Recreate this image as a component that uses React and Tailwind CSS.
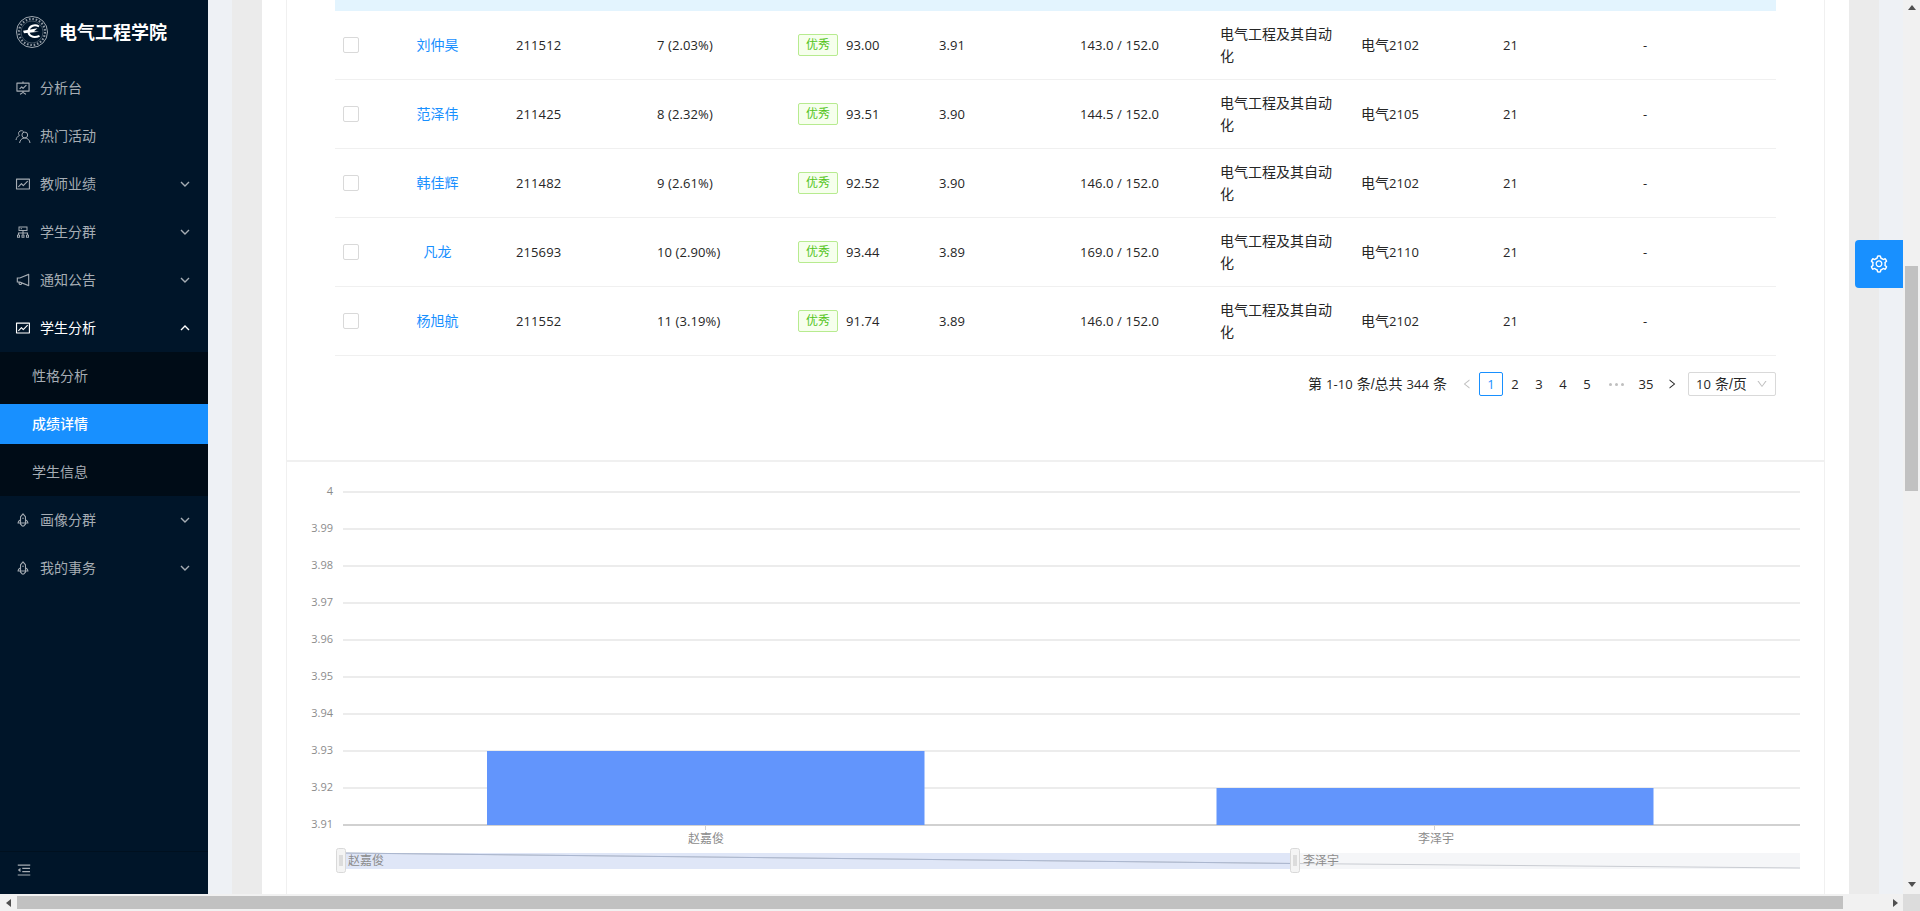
import React from 'react';
import {
  AiOutlineFundProjectionScreen,
  AiOutlineFund,
  AiOutlineCluster,
  AiOutlineNotification,
  AiOutlineRocket,
  AiOutlineMenuFold,
  AiOutlineSetting,
  AiOutlineLeft,
  AiOutlineRight,
  AiOutlineDown,
} from 'react-icons/ai';

const FONT = '"Liberation Sans", "Noto Sans CJK SC", sans-serif';
const NUM_FONT = '"Open Sans", sans-serif';

const rows = [
  { name: '刘仲昊', id: '211512', rank: '7 (2.03%)', score: '93.00', gpa: '3.91', credit: '143.0 / 152.0', cls: '2102' },
  { name: '范泽伟', id: '211425', rank: '8 (2.32%)', score: '93.51', gpa: '3.90', credit: '144.5 / 152.0', cls: '2105' },
  { name: '韩佳辉', id: '211482', rank: '9 (2.61%)', score: '92.52', gpa: '3.90', credit: '146.0 / 152.0', cls: '2102' },
  { name: '凡龙', id: '215693', rank: '10 (2.90%)', score: '93.44', gpa: '3.89', credit: '169.0 / 152.0', cls: '2110' },
  { name: '杨旭航', id: '211552', rank: '11 (3.19%)', score: '91.74', gpa: '3.89', credit: '146.0 / 152.0', cls: '2102' },
];

const ticks = ['4', '3.99', '3.98', '3.97', '3.96', '3.95', '3.94', '3.93', '3.92', '3.91'];

function Num({ children }) {
  return <span className="font-['Open_Sans'] text-[13px] tracking-[0.1px]">{children}</span>;
}

function Chevron({ up }) {
  return (
    <svg width="10" height="6" viewBox="0 0 10 6" fill="none" stroke="currentColor" strokeWidth="1.4" className="ml-auto">
      <path d={up ? 'M1 5l4-4 4 4' : 'M1 1l4 4 4-4'} />
    </svg>
  );
}

// two overlapping people, no matching icon in the packages
function PeopleIcon({ size, className }) {
  return (
    <svg width={size} height={size} viewBox="0 0 16 16" fill="none" stroke="currentColor" strokeWidth="1" className={className}>
      <circle cx="9.8" cy="7" r="2.9" />
      <path d="M4.6 15c.3-2.9 2.4-5 5.2-5s4.9 2.1 5.2 5" />
      <path d="M8.6 3.6A3 3 0 0 0 4 3.9c-.8 1.2-.5 2.6.5 3.5C2.6 8.2 1.3 10 1 12" />
    </svg>
  );
}

function MenuItem({ icon: Icon, label, arrow, open }) {
  return (
    <div className={`flex items-center h-10 my-1 pl-[15px] pr-[18px] text-sm ${open ? 'text-white' : 'text-[#a6adb4]'}`}>
      <Icon size={16} className="mr-[9px] shrink-0" />
      <span>{label}</span>
      {arrow && <Chevron up={open} />}
    </div>
  );
}

function SubItem({ label, active }) {
  return (
    <div className={`flex items-center h-10 my-1 pl-8 text-sm ${active ? 'bg-[#1890ff] text-white font-medium' : 'text-[#a6adb4]'}`}>
      {label}
    </div>
  );
}

function Logo() {
  return (
    <svg width="32" height="32" viewBox="0 0 32 32" className="shrink-0">
      <circle cx="16" cy="16" r="15.5" fill="none" stroke="#c9ced3" strokeWidth="0.8" />
      <circle cx="16" cy="16" r="13" fill="none" stroke="#8d97a1" strokeWidth="2.2" strokeDasharray="1.6 1.8" />
      <circle cx="16" cy="16" r="11" fill="none" stroke="#7f8a95" strokeWidth="0.5" />
      <path d="M23 10.5C19 8 13.5 9.5 12.5 14.5C12 19.5 17 23 23.5 19.8" fill="none" stroke="#fff" strokeWidth="2" />
      <path d="M7 14.8L21.5 12.2L18 15.2L23 15.8L8 17.2Z" fill="#fff" />
    </svg>
  );
}

function Sidebar() {
  return (
    <aside className="w-[208px] h-[894px] bg-[#001529] flex flex-col shrink-0">
      <div className="flex items-center h-16 pl-4 shrink-0">
        <Logo />
        <span className="ml-[11px] pt-[2px] text-lg font-bold text-white leading-none">电气工程学院</span>
      </div>
      <div className="flex-1 flex flex-col">
        <MenuItem icon={AiOutlineFundProjectionScreen} label="分析台" />
        <MenuItem icon={PeopleIcon} label="热门活动" />
        <MenuItem icon={AiOutlineFund} label="教师业绩" arrow />
        <MenuItem icon={AiOutlineCluster} label="学生分群" arrow />
        <MenuItem icon={AiOutlineNotification} label="通知公告" arrow />
        <MenuItem icon={AiOutlineFund} label="学生分析" arrow open />
        <div className="bg-[#000c17] flex flex-col">
          <SubItem label="性格分析" />
          <SubItem label="成绩详情" active />
          <SubItem label="学生信息" />
        </div>
        <MenuItem icon={AiOutlineRocket} label="画像分群" arrow />
        <MenuItem icon={AiOutlineRocket} label="我的事务" arrow />
      </div>
      <div className="h-[43px] border-t border-[#00101f] flex items-center pl-4 pb-[7px] text-[#a6adb4]">
        <AiOutlineMenuFold size={16} />
      </div>
    </aside>
  );
}

function TableRow({ r }) {
  return (
    <div className="grid grid-cols-[40px_125px_repeat(8,141px)_148px] items-center h-[69px] border-b border-[#f0f0f0] text-sm text-[#262626]">
      <div className="pl-2">
        <div className="w-4 h-4 rounded-[2px] border border-[#d9d9d9] bg-white" />
      </div>
      <div className="text-center text-[#1890ff]">{r.name}</div>
      <div className="pl-4"><Num>{r.id}</Num></div>
      <div className="pl-4"><Num>{r.rank}</Num></div>
      <div className="pl-4 flex items-center">
        <span className="h-[22px] w-10 mr-2 flex items-center justify-center rounded-[2px] border border-[#b7eb8f] bg-[#f6ffed] text-xs text-[#52c41a]">优秀</span>
        <Num>{r.score}</Num>
      </div>
      <div className="pl-4"><Num>{r.gpa}</Num></div>
      <div className="pl-4"><Num>{r.credit}</Num></div>
      <div className="pl-[15px] pr-3 leading-[22px]">电气工程及其自动化</div>
      <div className="pl-[15px]">电气<Num>{r.cls}</Num></div>
      <div className="pl-4"><Num>21</Num></div>
      <div className="pl-[15px]"><Num>-</Num></div>
    </div>
  );
}

function Pagination() {
  return (
    <div className="flex items-center justify-end h-6 mt-[16px] text-sm text-[#262626]">
      <span className="mr-2">第 <Num>1-10</Num> 条/总共 <Num>344</Num> 条</span>
      <span className="w-6 flex justify-center text-[#bfbfbf]"><AiOutlineLeft size={12} /></span>
      <span className="w-6 h-6 flex items-center justify-center rounded-[2px] border border-[#1890ff] text-[#1890ff]"><Num>1</Num></span>
      {['2', '3', '4', '5'].map((n) => (
        <span key={n} className="w-6 text-center"><Num>{n}</Num></span>
      ))}
      <span className="w-[35px] flex justify-center gap-[3px]">
        <i className="w-[3px] h-[3px] rounded-full bg-[#bfbfbf]" />
        <i className="w-[3px] h-[3px] rounded-full bg-[#bfbfbf]" />
        <i className="w-[3px] h-[3px] rounded-full bg-[#bfbfbf]" />
      </span>
      <span className="w-6 text-center"><Num>35</Num></span>
      <span className="w-[28px] flex justify-center"><AiOutlineRight size={12} /></span>
      <div className="ml-[2px] w-[88px] h-6 flex items-center pl-[7px] pr-[7px] rounded-[2px] border border-[#d9d9d9]">
        <Num>10</Num>&nbsp;条/页
        <AiOutlineDown size={12} className="ml-auto text-[#bfbfbf]" />
      </div>
    </div>
  );
}

// bar chart with the data zoom strip underneath, x/y are relative to the card
function Chart() {
  const left = 56;
  const right = 1513;
  const y = (i) => 30 + i * 37;
  return (
    <svg width="1536" height="430" viewBox="0 0 1536 430" className="block" style={{ fontFamily: FONT }}>
      {ticks.map((t, i) => (
        <g key={t}>
          <line x1={left} x2={right} y1={y(i)} y2={y(i)} stroke={i === 9 ? '#a3a3a3' : '#d9d9d9'} />
          <text x="46" y={y(i) + 3} textAnchor="end" fontSize="11" fill="#8c8c8c" style={{ fontFamily: NUM_FONT }}>{t}</text>
        </g>
      ))}
      <rect x="200" y={y(7)} width="437.5" height="74" fill="#6295fc" />
      <rect x="929.5" y={y(8)} width="437" height="37" fill="#6295fc" />
      <line x1="418.5" x2="418.5" y1={y(9)} y2={y(9) + 5} stroke="#d0d0d0" />
      <line x1="1147.5" x2="1147.5" y1={y(9)} y2={y(9) + 5} stroke="#d0d0d0" />
      <text x="419" y="381" textAnchor="middle" fontSize="12" fill="#8c8c8c">赵嘉俊</text>
      <text x="1149" y="381" textAnchor="middle" fontSize="12" fill="#8c8c8c">李泽宇</text>

      <rect x="56" y="391" width="1457" height="16" fill="#f5f6f8" />
      <rect x="56" y="391" width="952" height="16" fill="#dfe6f7" />
      <path d="M56 391L1008 401.5L1513 406" fill="none" stroke="#c9ccd2" />
      <path d="M56 391L1008 401.5" fill="none" stroke="#aab6cf" />
      <text x="61" y="403" fontSize="12" fill="#8c8c8c">赵嘉俊</text>
      <text x="1016" y="403" fontSize="12" fill="#8c8c8c">李泽宇</text>
      {[49.5, 1003.5].map((x) => (
        <g key={x}>
          <rect x={x} y="386.5" width="9" height="24" rx="2" fill="#f4f4f4" stroke="#d9d9d9" />
          <line x1={x + 3.5} x2={x + 3.5} y1="393" y2="404" stroke="#c4c4c4" />
          <line x1={x + 5.5} x2={x + 5.5} y1="393" y2="404" stroke="#c4c4c4" />
        </g>
      ))}
    </svg>
  );
}

function Arrow({ dir, className }) {
  const d = { up: 'M4 1l4 5H0z', down: 'M4 6L0 1h8z', left: 'M1 4l5-4v8z', right: 'M7 4L2 0v8z' }[dir];
  return (
    <svg width="8" height="8" viewBox="0 0 8 8" fill="#505050" className={className}><path d={d} /></svg>
  );
}

export default function App() {
  return (
    <div className="relative w-[1920px] h-[911px] overflow-hidden bg-[#f1f1f1] flex flex-col" style={{ fontFamily: FONT }}>
      <div className="flex h-[894px]">
        <Sidebar />
        <div className="w-6 bg-[#eef1f5] shrink-0" />
        <div className="w-[30px] bg-[#ebebeb] shrink-0" />
        <main className="w-[1587px] bg-white pl-6 pr-6 shrink-0 overflow-hidden">
          <div className="h-full border-x border-[#f0f0f0]">
            <div className="pl-[48px] pr-[48px] h-[460px]">
              <div className="h-[11px] bg-[#e3f4fe]" />
              {rows.map((r) => <TableRow key={r.id} r={r} />)}
              <Pagination />
            </div>
            <div className="border-t-2 border-[#f0f0f0]">
              <Chart />
            </div>
          </div>
        </main>
        <div className="w-[30px] bg-[#ebebeb] shrink-0" />
        <div className="w-6 bg-[#eef1f5] shrink-0" />
        {/* vertical scrollbar */}
        <div className="w-[17px] flex flex-col items-center justify-between pt-1 pb-[5px] relative shrink-0">
          <Arrow dir="up" />
          <Arrow dir="down" />
          <div className="absolute left-[2px] top-[266px] w-[13px] h-[225px] bg-[#c1c1c1]" />
        </div>
      </div>
      {/* horizontal scrollbar */}
      <div className="h-[17px] flex items-center">
        <div className="w-[17px] flex justify-center"><Arrow dir="left" /></div>
        <div className="w-[1826px] h-[13px] bg-[#c1c1c1]" />
        <div className="w-[60px] flex justify-end pr-[4px]"><Arrow dir="right" /></div>
        <div className="w-[17px] h-[17px] bg-[#dcdcdc]" />
      </div>
      <button className="absolute left-[1855px] top-[240px] w-12 h-12 bg-[#1890ff] rounded-l flex items-center justify-center text-white">
        <AiOutlineSetting size={20} />
      </button>
    </div>
  );
}
